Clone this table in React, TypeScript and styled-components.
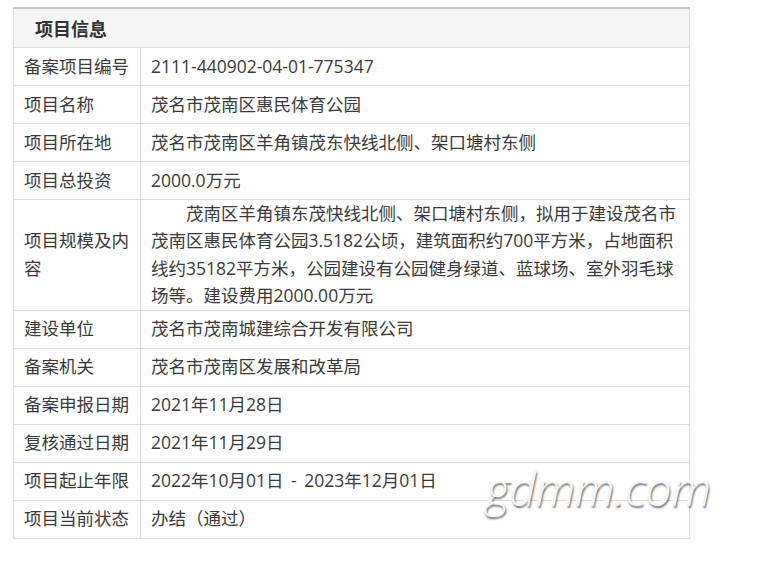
import styled, { createGlobalStyle } from "styled-components";

const GlobalStyle = createGlobalStyle`
  body {
    margin: 0;
    background: #ffffff;
    font-family: "Open Sans", "Noto Sans CJK SC", sans-serif;
  }
`;

const rows: [string, string][] = [
  ["备案项目编号", "2111-440902-04-01-775347"],
  ["项目名称", "茂名市茂南区惠民体育公园"],
  ["项目所在地", "茂名市茂南区羊角镇茂东快线北侧、架口塘村东侧"],
  ["项目总投资", "2000.0万元"],
  [
    "项目规模及内容",
    "茂南区羊角镇东茂快线北侧、架口塘村东侧，拟用于建设茂名市茂南区惠民体育公园3.5182公顷，建筑面积约700平方米，占地面积线约35182平方米，公园建设有公园健身绿道、蓝球场、室外羽毛球场等。建设费用2000.00万元",
  ],
  ["建设单位", "茂名市茂南城建综合开发有限公司"],
  ["备案机关", "茂名市茂南区发展和改革局"],
  ["备案申报日期", "2021年11月28日"],
  ["复核通过日期", "2021年11月29日"],
  ["项目起止年限", "2022年10月01日 - 2023年12月01日"],
  ["项目当前状态", "办结（通过）"],
];

export default function App() {
  return (
    <>
      <GlobalStyle />
      <Page>
        <InfoTable>
          <thead>
            <tr>
              <HeadCell colSpan={2}>项目信息</HeadCell>
            </tr>
          </thead>
          <tbody>
            {rows.map(([label, value], i) => (
              <tr key={label}>
                <LabelCell>{label}</LabelCell>
                <ValueCell $indent={i === 4}>{value}</ValueCell>
              </tr>
            ))}
          </tbody>
        </InfoTable>
        <Watermark>gdmm.com</Watermark>
      </Page>
    </>
  );
}

const Page = styled.div`
  position: relative;
  width: 758px;
  height: 564px;
  padding: 7px 0 0 13px;
  box-sizing: border-box;
`;

const InfoTable = styled.table`
  width: 677px;
  border-collapse: collapse;
  border-top: 2px solid #c6c6c6;
  color: #3a3a3a;
  font-size: 17.5px;
`;

const HeadCell = styled.th`
  height: 38px;
  padding: 0 0 0 21px;
  text-align: left;
  font-size: 18px;
  font-weight: 700;
  color: #333333;
  background: #f5f5f5;
  border: 1px solid #dddddd;
  border-top: none;
`;

const LabelCell = styled.td`
  width: 105px;
  height: 37px;
  padding: 0 11px 0 10px;
  line-height: 27.4px;
  border: 1px solid #dddddd;
  vertical-align: middle;
`;

const ValueCell = styled.td<{ $indent?: boolean }>`
  height: 37px;
  padding: 0 10px;
  line-height: 27.4px;
  border: 1px solid #dddddd;
  vertical-align: middle;
  word-spacing: 3px;
  text-indent: ${(p) => (p.$indent ? "2em" : "0")};
`;

const Watermark = styled.div`
  position: absolute;
  left: 486px;
  top: 465px;
  font-family: "Open Sans", sans-serif;
  font-style: italic;
  font-weight: 300;
  font-size: 46px;
  line-height: 1;
  color: #f6f6f6;
  text-shadow: 1px 2px 2px #6a6a6a, -1px -1px 0 #ffffff;
  pointer-events: none;
`;
